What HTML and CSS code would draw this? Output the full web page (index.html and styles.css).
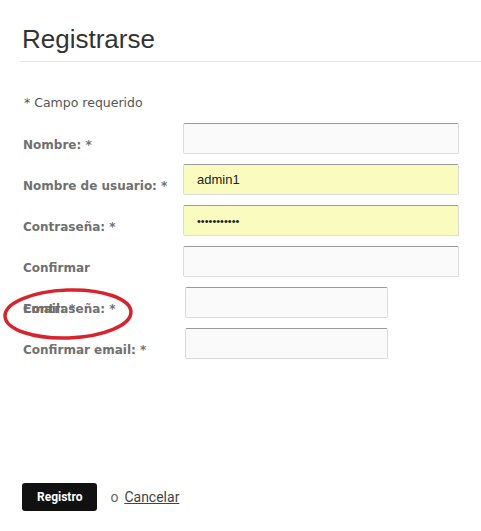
FILE: index.html
```html
<!DOCTYPE html>
<html>
<head>
    <title>Registrarse</title>
    <meta name="viewport" content="width=device-width, initial-scale=1.0">
    <link rel="stylesheet" href="styles.css">
</head>
<body>
    <div class="page">
        <h1 class="page-title">Registrarse</h1>
        <form class="register-form">
            <p class="required-note">* Campo requerido</p>
            <div class="form-row">
                <label class="form-label">Nombre: *</label>
                <input class="form-input" type="text">
            </div>
            <div class="form-row">
                <label class="form-label">Nombre de usuario: *</label>
                <input class="form-input filled" type="text" value="admin1">
            </div>
            <div class="form-row">
                <label class="form-label">Contraseña: *</label>
                <input class="form-input filled password" type="password" value="secreto1234">
            </div>
            <div class="form-row">
                <label class="form-label">Confirmar Contraseña: *</label>
                <input class="form-input" type="password">
            </div>
            <div class="form-row">
                <label class="form-label">Email: *</label>
                <input class="form-input short" type="text">
            </div>
            <div class="form-row">
                <label class="form-label">Confirmar email: *</label>
                <input class="form-input short" type="text">
            </div>

            <!-- annotation drawn over the overlapping labels -->
            <svg class="mark" width="140" height="60" viewBox="0 0 140 60">
                <ellipse cx="68" cy="30" rx="63" ry="24" fill="none" stroke="#d7232e" stroke-width="3.5" transform="rotate(-2 68 30)"/>
            </svg>

            <div class="form-actions">
                <button class="submit-btn" type="button">Registro</button>
                <span class="or">o</span>
                <a class="cancel-link" href="#">Cancelar</a>
            </div>
        </form>
    </div>
</body>
</html>
```

FILE: styles.css
```css
body {
    margin: 0;
    background-color: #fff;
    font-family: "DejaVu Sans", Verdana, sans-serif;
}
.page {
    padding-left: 20px;
}
.page-title {
    margin: 0;
    padding: 24px 0 7px 2px;
    font-family: "Liberation Sans", Arial, sans-serif;
    font-size: 26px;
    font-weight: normal;
    line-height: 30px;
    color: #333;
    border-bottom: 1px solid #e5e5e5;
}
.register-form {
    position: relative;
    padding-left: 3px;
}
.required-note {
    margin: 31px 0 10px 1px;
    font-size: 12.5px;
    line-height: 20px;
    color: #555;
}
.form-row {
    display: flex;
    height: 41px;
}
.form-label {
    width: 150px;
    flex-shrink: 0;
    margin-right: 10px;
    padding-top: 2px;
    font-size: 12px;
    font-weight: bold;
    line-height: 41px;
    color: #707070;
}
.form-input {
    box-sizing: border-box;
    width: 276px;
    height: 31px;
    padding: 0 13px;
    border: 1px solid #dcdcdc;
    border-top-color: #9a9a9a;
    border-radius: 2px;
    background-color: #fafafa;
    font-family: "Liberation Sans", Arial, sans-serif;
    font-size: 13px;
    color: #222;
}
.form-input.filled {
    background-color: #fafcbf;
}
.form-input.password {
    font-size: 11px;
}
.form-input.short {
    width: 203px;
    margin-left: 2px;
}
.mark {
    position: absolute;
    left: -20px;
    top: 191px;
}
.form-actions {
    display: flex;
    align-items: center;
    margin-top: 114px;
    margin-left: -1px;
    font-family: Roboto, sans-serif;
}
.submit-btn {
    height: 28px;
    padding: 0 15px;
    border: none;
    border-radius: 3px;
    background-color: #111;
    color: #fff;
    font-family: Roboto, sans-serif;
    font-size: 12px;
    font-weight: bold;
    cursor: pointer;
}
.or {
    margin-left: 13px;
    font-size: 14px;
    color: #666;
}
.cancel-link {
    margin-left: 6px;
    font-size: 14px;
    color: #444;
}
```
